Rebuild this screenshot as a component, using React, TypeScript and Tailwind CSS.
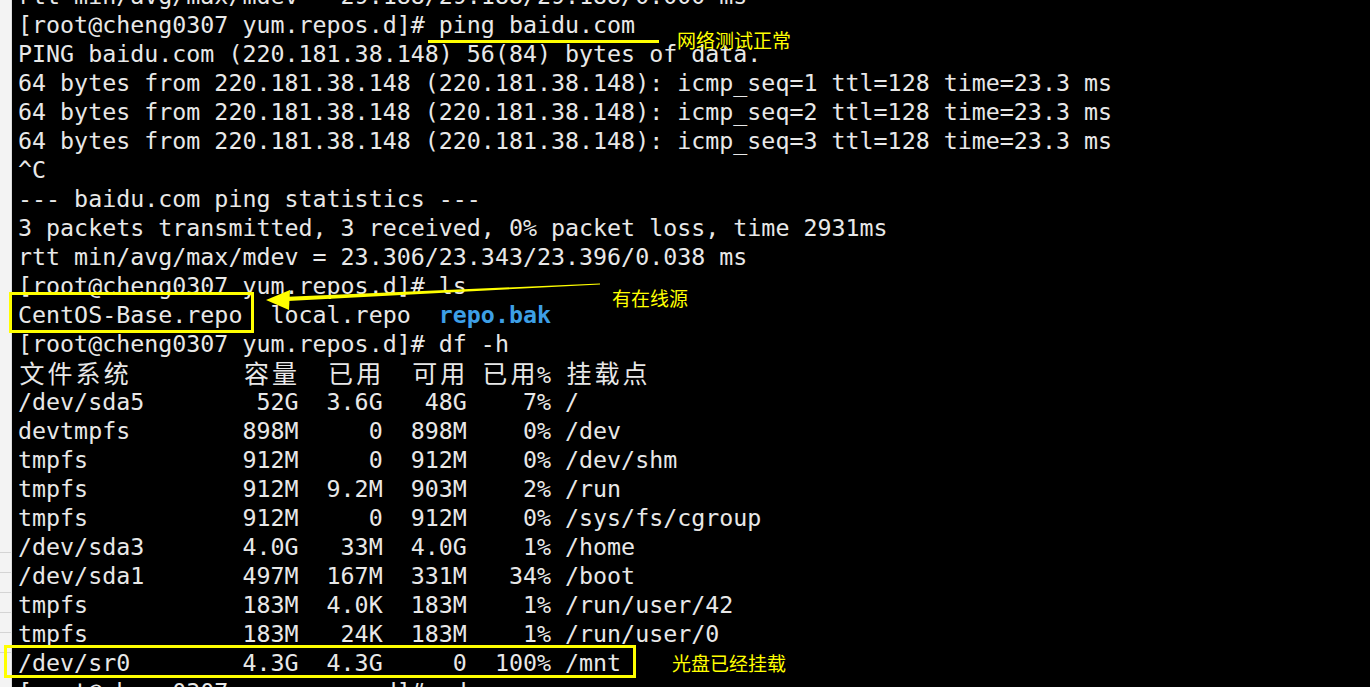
import type { ReactNode } from 'react'

const CJK = /[\u2e80-\u9fff\uff00-\uffef]/

// terminal output, one entry per row (29px each)
const rows: string[] = [
  'rtt min/avg/max/mdev = 29.188/29.188/29.188/0.000 ms',
  '[root@cheng0307 yum.repos.d]# ping baidu.com',
  'PING baidu.com (220.181.38.148) 56(84) bytes of data.',
  '64 bytes from 220.181.38.148 (220.181.38.148): icmp_seq=1 ttl=128 time=23.3 ms',
  '64 bytes from 220.181.38.148 (220.181.38.148): icmp_seq=2 ttl=128 time=23.3 ms',
  '64 bytes from 220.181.38.148 (220.181.38.148): icmp_seq=3 ttl=128 time=23.3 ms',
  '^C',
  '--- baidu.com ping statistics ---',
  '3 packets transmitted, 3 received, 0% packet loss, time 2931ms',
  'rtt min/avg/max/mdev = 23.306/23.343/23.396/0.038 ms',
  '[root@cheng0307 yum.repos.d]# ls',
  '@LS',
  '[root@cheng0307 yum.repos.d]# df -h',
  '文件系统        容量  已用  可用 已用% 挂载点',
  '/dev/sda5        52G  3.6G   48G    7% /',
  'devtmpfs        898M     0  898M    0% /dev',
  'tmpfs           912M     0  912M    0% /dev/shm',
  'tmpfs           912M  9.2M  903M    2% /run',
  'tmpfs           912M     0  912M    0% /sys/fs/cgroup',
  '/dev/sda3       4.0G   33M  4.0G    1% /home',
  '/dev/sda1       497M  167M  331M   34% /boot',
  'tmpfs           183M  4.0K  183M    1% /run/user/42',
  'tmpfs           183M   24K  183M    1% /run/user/0',
  '/dev/sr0        4.3G  4.3G     0  100% /mnt',
  '[root@cheng0307 yum.repos.d]# cd',
]

function Cells({ text }: { text: string }) {
  const out: ReactNode[] = []
  let buf = ''
  ;[...text].forEach((ch, i) => {
    if (CJK.test(ch)) {
      if (buf) {
        out.push(buf)
        buf = ''
      }
      out.push(
        <span key={i} className="inline-block w-[28.06px] text-center font-['Noto_Sans_CJK_SC',sans-serif] text-[25px]">
          {ch}
        </span>
      )
    } else buf += ch
  })
  if (buf) out.push(buf)
  return <>{out}</>
}

function Row({ text }: { text: string }) {
  if (text === '@LS') {
    return (
      <div className="h-[29px] whitespace-pre">
        CentOS-Base.repo  local.repo  <span className="font-bold text-[#3d9fe6]">repo.bak</span>
      </div>
    )
  }
  return (
    <div className="h-[29px] whitespace-pre">
      <Cells text={text} />
    </div>
  )
}

export default function App() {
  return (
    <div className="relative flex h-[687px] w-full overflow-hidden bg-black">
      {/* left edge of the window behind */}
      <div className="flex w-[12px] shrink-0 flex-col border-r border-[#dcdcdc] bg-[#f3f3f3]">
        <div className="h-[552px] shrink-0"></div>
        <div className="h-[20px] border-t border-[#d4d4d4]"></div>
        <div className="h-[20px] border-t border-[#d4d4d4]"></div>
        <div className="h-[20px] border-t border-[#d4d4d4]"></div>
        <div className="h-[20px] border-t border-[#d4d4d4]"></div>
        <div className="h-[20px] border-t border-[#d4d4d4]"></div>
        <div className="h-[20px] border-t border-[#d4d4d4]"></div>
      </div>

      <div className="flex-1">
        <div className="-mt-[18.6px] flex flex-col pl-[6px] font-['DejaVu_Sans_Mono',monospace] text-[23.3px] leading-[29px] text-[#e8e8e8]">
          {rows.map((r, i) => (
            <Row key={i} text={r} />
          ))}
        </div>
      </div>

      {/* annotations */}
      <svg className="pointer-events-none absolute inset-0" width="1370" height="687">
        <rect x="428" y="40" width="231" height="3" fill="#ffff00" />
        <polygon points="288,296.8 600,283.5 600,284.5 288,300.9" fill="#ffff00" />
        <polygon points="266,300 290,290 289,310" fill="#ffff00" />
      </svg>
      <div className="absolute left-[9px] top-[292px] h-[41px] w-[245px] border-[3px] border-[#ffff00]"></div>
      <div className="absolute left-[4px] top-[645px] h-[33px] w-[632px] border-[3px] border-[#ffff00]"></div>
      <span className="absolute left-[677px] top-[30px] font-['Noto_Sans_CJK_SC',sans-serif] text-[19px] leading-[19px] text-[#ffff00]">网络测试正常</span>
      <span className="absolute left-[612px] top-[288px] font-['Noto_Sans_CJK_SC',sans-serif] text-[19px] leading-[19px] text-[#ffff00]">有在线源</span>
      <span className="absolute left-[672px] top-[653px] font-['Noto_Sans_CJK_SC',sans-serif] text-[19px] leading-[19px] text-[#ffff00]">光盘已经挂载</span>
    </div>
  )
}
